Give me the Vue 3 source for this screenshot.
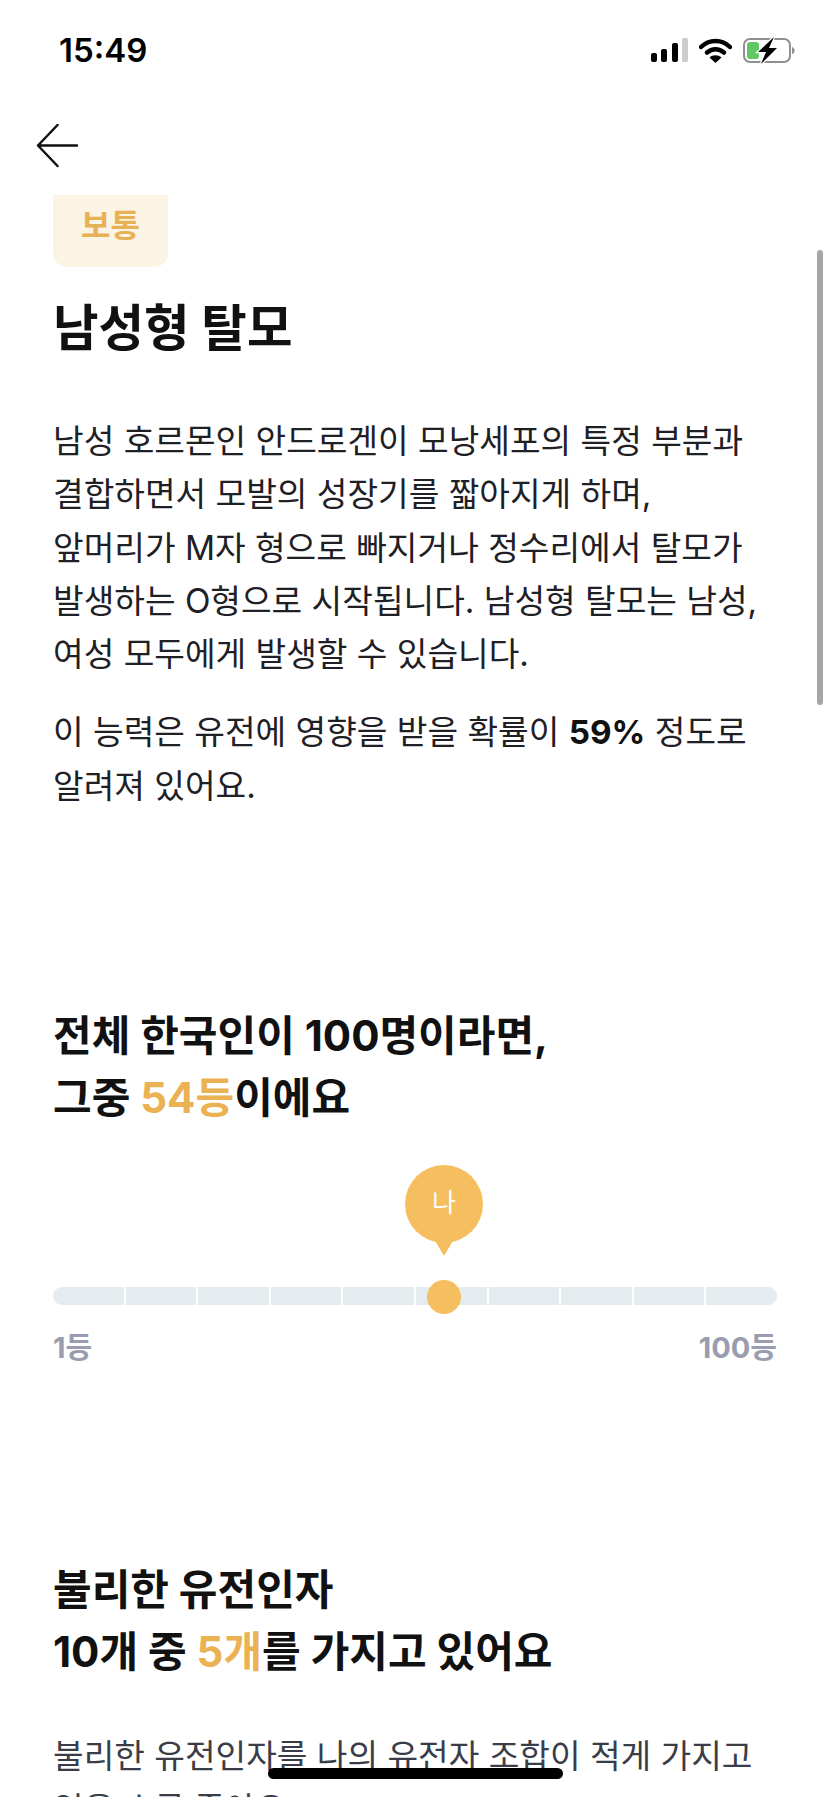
<script setup>
const segments = Array.from({ length: 10 }, (_, i) => i)
</script>

<template>
  <div class="screen">
    <header class="status">
      <span class="time">15:49</span>
      <div class="status-icons">
        <svg width="37" height="25" viewBox="0 0 37 25">
          <rect x="0" y="15" width="6" height="9" rx="2" fill="#000" />
          <rect x="10" y="11" width="6" height="13" rx="2" fill="#000" />
          <rect x="21" y="5" width="6" height="19" rx="2" fill="#000" />
          <rect x="31" y="0" width="6" height="24" rx="1.500" fill="#ccc" />
        </svg>
        <svg width="33" height="25" viewBox="0 0 33 25">
          <path d="M2 9C10 1 23 1 31 9" fill="none" stroke="#000" stroke-width="4.500" stroke-linecap="round" />
          <path d="M8 14.500C13 10 20 10 25 14.500" fill="none" stroke="#000" stroke-width="4.500" stroke-linecap="round" />
          <path d="M16.500 25L10.500 19.500C13.500 16.500 19.500 16.500 22.500 19.500Z" fill="#000" />
        </svg>
        <svg width="53" height="27" viewBox="0 0 53 27">
          <rect x="1" y="2" width="46" height="23" rx="6" fill="none" stroke="#8f8f8f" stroke-width="2" />
          <rect x="4" y="5" width="12" height="17" rx="3" fill="#5fc862" />
          <path d="M49 10C52.500 11 52.500 16 49 17Z" fill="#8f8f8f" />
          <path d="M31 0L15 15H23L18 27L34 11H26Z" fill="#000" stroke="#fff" stroke-width="2.500" paint-order="stroke" />
        </svg>
      </div>
    </header>

    <nav class="nav">
      <svg width="44" height="44" viewBox="0 0 44 44">
        <path d="M21.500 2L2 22.500L21.500 43M2 22.500H41" transform="translate(0 -1)" fill="none" stroke="#111" stroke-width="2.500" stroke-linecap="round" stroke-linejoin="round" />
      </svg>
    </nav>

    <main class="content">
      <div class="badge">보통</div>
      <h1 class="title">남성형 탈모</h1>
      <p class="body lead">
        남성 호르몬인 안드로겐이 모낭세포의 특정 부분과<br />
        결합하면서 모발의 성장기를 짧아지게 하며,<br />
        앞머리가 M자 형으로 빠지거나 정수리에서 탈모가<br />
        발생하는 O형으로 시작됩니다. 남성형 탈모는 남성,<br />
        여성 모두에게 발생할 수 있습니다.
      </p>
      <p class="body second">
        이 능력은 유전에 영향을 받을 확률이 <b>59%</b> 정도로<br />
        알려져 있어요.
      </p>

      <h2 class="heading rank-heading">
        전체 한국인이 100명이라면,<br />
        그중 <em>54등</em>이에요
      </h2>

      <div class="chart">
        <div class="bubble-row">
          <div class="bubble">나</div>
        </div>
        <div class="track">
          <span v-for="s in segments" :key="s" class="segment"></span>
          <span class="dot"></span>
        </div>
        <div class="scale">
          <span>1등</span>
          <span>100등</span>
        </div>
      </div>

      <h2 class="heading factor-heading">
        불리한 유전인자<br />
        10개 중 <em>5개</em>를 가지고 있어요
      </h2>
      <p class="body factor-body">
        불리한 유전인자를 나의 유전자 조합이 적게 가지고<br />
        있을 수록 좋아요.
      </p>
    </main>

    <div class="scrollbar"></div>
    <div class="home"></div>
  </div>
</template>

<style>
html, body { margin: 0; background: #fff; }
</style>

<style scoped>
.screen {
  position: relative;
  width: 830px;
  height: 1797px;
  overflow: hidden;
  background: #fff;
  font-family: Inter, "Noto Sans CJK KR", "Noto Sans", sans-serif;
  color: #111;
}
.status {
  height: 104px;
  padding: 33px 34px 0 59px;
  box-sizing: border-box;
  display: flex;
  justify-content: space-between;
  align-items: flex-start;
}
.time {
  font-size: 33px;
  line-height: 34px;
  font-weight: 600;
  color: #000;
}
.status-icons {
  display: flex;
  align-items: center;
  gap: 11px;
  height: 34px;
}
.nav {
  height: 91px;
  box-sizing: border-box;
  padding: 20px 0 0 36px;
}
.nav svg { display: block; }
.content {
  padding: 0 53px;
}
.badge {
  width: 115px;
  height: 72px;
  background: #fbf3e4;
  border-radius: 0 0 14px 14px;
  color: #e9b155;
  font-size: 32px;
  font-weight: 700;
  text-align: center;
  line-height: 62px;
}
.title {
  margin: 24px 0 0;
  font-size: 49.500px;
  line-height: 74px;
  font-weight: 700;
}
.body {
  margin: 0;
  font-size: 33.300px;
  line-height: 53.300px;
  color: #1f2026;
  white-space: nowrap;
}
.body.lead { margin-top: 50px; }
.body.second { margin-top: 25px; }
.body b { font-weight: 700; color: #111; }
.heading {
  margin: 0;
  font-size: 42px;
  line-height: 62px;
  font-weight: 700;
}
.heading em {
  font-style: normal;
  color: #eab253;
}
.rank-heading { margin-top: 192px; }
.chart { margin-top: 36px; }
.bubble-row {
  height: 122px;
  position: relative;
}
.bubble {
  position: absolute;
  left: 352px;
  top: 0;
  width: 78px;
  height: 78px;
  border-radius: 50%;
  background: #f5bf5f;
  color: #fff;
  font-size: 26px;
  line-height: 76px;
  text-align: center;
}
.bubble::after {
  content: "";
  position: absolute;
  left: 29px;
  top: 74px;
  border-left: 10px solid transparent;
  border-right: 10px solid transparent;
  border-top: 17px solid #f5bf5f;
}
.track {
  position: relative;
  display: flex;
  gap: 2px;
  height: 18px;
}
.segment {
  flex: 1;
  background: #e5ecf0;
}
.segment:first-child { border-radius: 9px 0 0 9px; }
.segment:nth-child(10) { border-radius: 0 9px 9px 0; }
.dot {
  position: absolute;
  left: 374px;
  top: -7px;
  width: 34px;
  height: 34px;
  border-radius: 50%;
  background: #f5bf5f;
}
.scale {
  display: flex;
  justify-content: space-between;
  margin-top: 22px;
  font-size: 29px;
  line-height: 42px;
  font-weight: 700;
  color: #9a9cb0;
}
.factor-heading { margin-top: 190px; }
.factor-body { margin-top: 47px; color: #3a3d48; }
.scrollbar {
  position: absolute;
  right: 7px;
  top: 250px;
  width: 6px;
  height: 455px;
  border-radius: 3px;
  background: #a6a6a6;
}
.home {
  position: absolute;
  left: 268px;
  top: 1768px;
  width: 295px;
  height: 11px;
  border-radius: 6px;
  background: #000;
}
</style>
